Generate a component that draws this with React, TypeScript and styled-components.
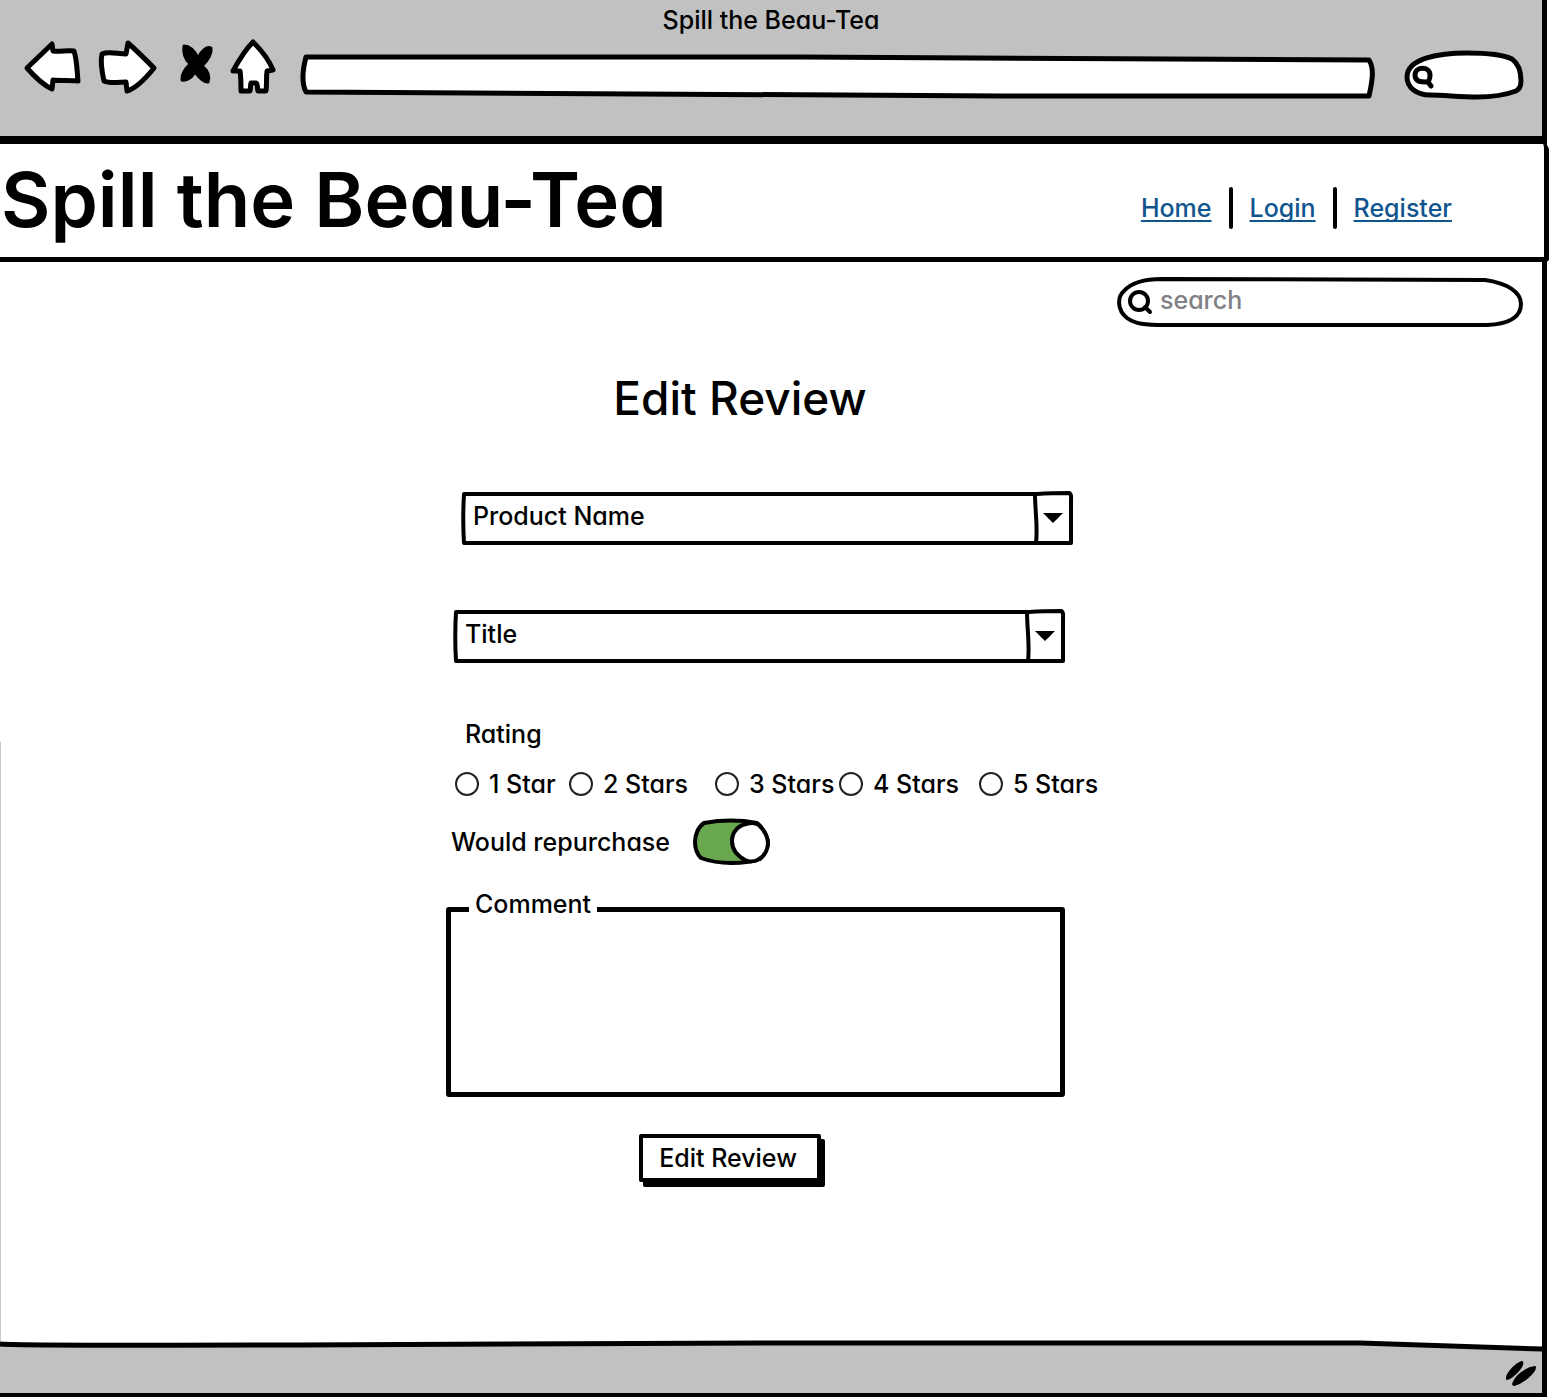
import React, { ReactNode } from "react";
import styled, { createGlobalStyle } from "styled-components";

const ink = "#000";
const grey = "#c1c1c1";

const GlobalStyle = createGlobalStyle`
  *, *::before, *::after { box-sizing: border-box; }
  body {
    margin: 0;
    background: #fff;
    color: ${ink};
    font-family: Inter, "Liberation Sans", sans-serif;
    font-size: 25px;
    font-weight: 500;
    line-height: 30px;
    font-feature-settings: "cv11";
  }
  input, select, textarea, button {
    font: inherit;
    font-feature-settings: inherit;
    color: inherit;
  }
`;

const Window = styled.div`
  display: flex;
  flex-direction: column;
  min-height: 100vh;
  margin-right: 18px;
  border-right: 5px solid ${ink};
`;

/* ---------- hand-drawn outlines ---------- */

const Sketched = styled.div<{ $width?: number; $height: number }>`
  position: relative;
  display: flex;
  flex: ${(p) => (p.$width ? "none" : "1")};
  width: ${(p) => (p.$width ? `${p.$width}px` : "auto")};
  height: ${(p) => p.$height}px;
`;

const OutlineSvg = styled.svg`
  position: absolute;
  inset: 0;
  width: 100%;
  height: 100%;
  overflow: visible;
  pointer-events: none;
`;

type OutlineProps = { box: string; d: string; stroke?: number; fill?: string; children?: ReactNode };

const Outline = ({ box, d, stroke = 5, fill = "#fff", children }: OutlineProps) => (
  <OutlineSvg viewBox={box} preserveAspectRatio="none" aria-hidden="true">
    <path
      d={d}
      fill={fill}
      stroke={ink}
      strokeWidth={stroke}
      strokeLinejoin="round"
      strokeLinecap="round"
      vectorEffect="non-scaling-stroke"
    />
    {children}
  </OutlineSvg>
);

const Field = styled.input<{ $indent?: number }>`
  position: relative;
  flex: 1;
  min-width: 0;
  padding: 0 20px 4px ${(p) => p.$indent ?? 16}px;
  border: 0;
  outline: 0;
  background: transparent;
  &::placeholder { color: #808086; opacity: 1; }
`;

/* ---------- browser chrome ---------- */

const Chrome = styled.div`
  height: 144px;
  background: ${grey};
  border-bottom: 8px solid ${ink};
`;

const WindowTitle = styled.div`
  line-height: 40px;
  text-align: center;
`;

const Toolbar = styled.div`
  display: flex;
  padding: 0 18px 0 24px;
`;

const ToolButtons = styled.div`
  display: flex;
  gap: 18px;
  margin-right: 25px;
`;

const ToolButton = styled.button`
  display: block;
  padding: 0;
  border: 0;
  background: none;
  svg { display: block; overflow: visible; }
`;

const AddressBar = styled.div`
  display: flex;
  flex: 1;
  margin-right: 29px;
`;

const tools = [
  {
    name: "Back", width: 56, solid: false,
    d: "M3 28 L28 4 L29 11 C36 12 43 10 50 11 C53 20 53 31 54 41 C45 40 37 41 29 40 L28 49 C19 45 10 36 3 28Z",
  },
  {
    name: "Forward", width: 58, solid: false,
    d: "M4 14 C10 11 20 14 28 14 L30 3 C38 10 48 20 56 28 C48 38 39 48 29 51 L28 42 C22 42 12 44 6 41 C4 32 2 22 4 14Z",
  },
  {
    name: "Stop", width: 39, solid: true,
    d: "M10 6 C17 6 21 12 24 18 C27 11 33 6 37 8 C38 14 33 21 28 26 C33 30 36 36 34 42 C28 42 24 36 21 32 C18 37 14 41 8 40 C7 34 12 28 16 24 C11 19 9 12 10 6Z",
  },
  {
    name: "Home", width: 45, solid: false,
    d: "M22 2 C30 10 38 20 42 30 L36 31 C35 38 36 44 35 51 L27 51 C26 48 27 44 25 43 L20 43 C19 45 20 48 19 51 L10 51 C10 44 10 37 9 31 L2 31 C8 20 14 10 22 2Z",
  },
];

/* ---------- site header ---------- */

const SiteHeader = styled.header`
  display: flex;
  align-items: center;
  justify-content: space-between;
  height: 118px;
  margin-right: -7px;
  padding: 0 92px 4px 1px;
  background: #fff;
  border: solid ${ink};
  border-width: 0 5px 5px 0;
  border-radius: 0 6px 4px 0;
`;

const SiteName = styled.div`
  font-size: 76px;
  font-weight: 600;
  line-height: 92px;
  white-space: nowrap;
`;

const Nav = styled.nav`
  display: flex;
  align-items: center;
  gap: 17px;
  padding-top: 18px;
`;

const NavLink = styled.a`
  color: #11558f;
  text-decoration: underline;
  text-decoration-thickness: 2px;
  text-underline-offset: 3px;
  text-decoration-skip-ink: none;
`;

const Divider = styled.span`
  width: 4px;
  height: 42px;
  border-radius: 2px;
  background: ${ink};
`;

/* ---------- page ---------- */

const Main = styled.main`
  display: flex;
  flex: 1;
  flex-direction: column;
  align-items: center;
  background: linear-gradient(#fff 480px, #c8c8c8 480px) left / 1px 100% no-repeat;
`;

const SearchRow = styled.div`
  display: flex;
  align-self: stretch;
  justify-content: flex-end;
  padding: 15px 19px 0;
`;

const Form = styled.form`
  display: flex;
  flex-direction: column;
  align-items: flex-start;
  width: 652px;
  padding-top: 43px;
`;

const Heading = styled.h1`
  width: 590px;
  margin: 0 0 65px;
  font-size: 46px;
  font-weight: 500;
  line-height: 56px;
  text-align: center;
`;

const SelectBox = styled.div<{ $indent: number; $after: number }>`
  position: relative;
  display: flex;
  width: 612px;
  height: 54px;
  margin: 0 0 ${(p) => p.$after}px ${(p) => p.$indent}px;
`;

const Select = styled.select`
  position: relative;
  flex: 1;
  padding: 0 48px 4px 12px;
  border: 0;
  outline: 0;
  appearance: none;
  background: transparent;
`;

const RadioGroup = styled.fieldset`
  display: block;
  min-width: 0;
  margin: 0 0 20px 10px;
  padding: 0;
  border: 0;
`;

const GroupName = styled.legend`
  margin-bottom: 20px;
  padding: 0 0 0 10px;
`;

const Options = styled.div`
  display: grid;
  grid-template-columns: 114px 146px 124px 140px auto;
  white-space: nowrap;
`;

const Option = styled.label`
  display: flex;
  align-items: center;
  gap: 10px;
`;

const Radio = styled.input`
  flex: none;
  width: 24px;
  height: 24px;
  margin: 0;
  border: 2px solid #222;
  border-radius: 50%;
  appearance: none;
  background: #fff;
  &:checked { box-shadow: inset 0 0 0 4px #fff; background: ${ink}; }
`;

const SwitchRow = styled.label`
  display: flex;
  align-items: center;
  gap: 23px;
  height: 46px;
  margin: 0 0 24px 6px;
`;

const SwitchInput = styled.input`
  flex: 1;
  margin: 0;
  appearance: none;
  outline: 0;
`;

const CommentBox = styled.fieldset`
  width: 619px;
  margin: 0 0 37px 1px;
  padding: 0;
  border: 5px solid ${ink};
  border-radius: 3px;
`;

const CommentLegend = styled.legend`
  margin-left: 18px;
  padding: 0 6px 10px;
`;

const CommentArea = styled.textarea`
  display: block;
  width: 100%;
  height: 163px;
  padding: 0 16px;
  border: 0;
  outline: 0;
  resize: none;
  background: transparent;
`;

const SubmitButton = styled.button`
  width: 182px;
  height: 48px;
  margin: 0 0 40px 194px;
  padding: 0 4px 0 0;
  border: 4px solid ${ink};
  border-radius: 2px;
  background: #fff;
  box-shadow: 4px 5px 0 ${ink};
`;

/* ---------- status bar ---------- */

const StatusBar = styled.footer`
  display: flex;
  flex-direction: column;
  height: 56px;
  background: ${grey};
  border-bottom: 4px solid ${ink};
`;

const StatusEdge = styled.svg`
  display: block;
  width: 100%;
  height: 12px;
  overflow: visible;
`;

const Grip = styled.svg`
  align-self: flex-end;
  margin: 8px 4px 0 0;
`;

const Dropdown = ({ label, indent, after }: { label: string; indent: number; after: number }) => (
  <SelectBox $indent={indent} $after={after}>
    <Outline
      box="0 0 612 54"
      stroke={4}
      d="M3 3 L576 3 C590 2 600 2 608 2 C611 3 610 6 610 10 L610 52 L3 52 C2 36 2 20 3 3Z M574 3 C574 20 577 36 575 52"
    >
      <path d="M582 22 L602 22 C598 26 595 29 592 32 C589 29 586 26 582 22Z" fill={ink} />
    </Outline>
    <Select aria-label={label} defaultValue={label}>
      <option>{label}</option>
    </Select>
  </SelectBox>
);

export default function App() {
  return (
    <>
      <GlobalStyle />
      <Window>
        <Chrome>
          <WindowTitle>Spill the Beau-Tea</WindowTitle>
          <Toolbar>
            <ToolButtons>
              {tools.map((t) => (
                <ToolButton key={t.name} type="button" aria-label={t.name}>
                  <svg width={t.width} height="62" viewBox={`0 0 ${t.width} 62`}>
                    <path
                      d={t.d}
                      fill={t.solid ? ink : "#fff"}
                      stroke={ink}
                      strokeWidth={t.solid ? 3 : 5}
                      strokeLinejoin="round"
                    />
                  </svg>
                </ToolButton>
              ))}
            </ToolButtons>
            <AddressBar>
              <Sketched $height={62}>
                <Outline
                  box="0 0 1074 62"
                  d="M5 17 L500 17 L1068 20 C1073 28 1072 38 1068 56 L700 56 L5 52 C1 44 1 32 5 17Z"
                />
                <Field aria-label="Address" />
              </Sketched>
            </AddressBar>
            <Sketched $width={120} $height={62}>
              <Outline
                box="0 0 120 62"
                d="M3 37 C3 18 36 13 63 13 C80 13 98 14 108 19 C115 24 117 33 117 41 C117 46 116 49 112 51 C104 54 88 57 73 57 C56 57 40 55 26 55 C12 55 3 47 3 37Z"
              >
                <path
                  d="M11 35 C11 26 26 26 26 35 C26 38 25 42 22 42 C17 42 11 42 11 35Z M24 42 L27 46"
                  fill="none"
                  stroke={ink}
                  strokeWidth="5"
                  strokeLinecap="round"
                />
              </Outline>
              <Field aria-label="Web search" $indent={34} />
            </Sketched>
          </Toolbar>
        </Chrome>

        <SiteHeader>
          <SiteName>Spill the Beau-Tea</SiteName>
          <Nav>
            <NavLink href="#home">Home</NavLink>
            <Divider />
            <NavLink href="#login">Login</NavLink>
            <Divider />
            <NavLink href="#register">Register</NavLink>
          </Nav>
        </SiteHeader>

        <Main>
          <SearchRow>
            <Sketched $width={406} $height={50}>
              <Outline
                box="0 0 406 50"
                stroke={4}
                d="M45 2 L368 3 C390 6 404 15 404 27 C404 40 392 47 370 48 L48 48 C28 48 18 47 10 41 C0 33 0 20 7 14 C14 6 28 2 45 2Z"
              >
                <g fill="none" stroke={ink} strokeWidth="4" strokeLinecap="round">
                  <circle cx="22" cy="24" r="9" />
                  <path d="M28 30 L33 35" />
                </g>
              </Outline>
              <Field placeholder="search" aria-label="Search" $indent={43} />
            </Sketched>
          </SearchRow>

          <Form onSubmit={(e) => e.preventDefault()}>
            <Heading>Edit Review</Heading>
            <Dropdown label="Product Name" indent={16} after={64} />
            <Dropdown label="Title" indent={8} after={56} />

            <RadioGroup>
              <GroupName>Rating</GroupName>
              <Options>
                {["1 Star", "2 Stars", "3 Stars", "4 Stars", "5 Stars"].map((name) => (
                  <Option key={name}>
                    <Radio type="radio" name="rating" value={name} />
                    {name}
                  </Option>
                ))}
              </Options>
            </RadioGroup>

            <SwitchRow>
              Would repurchase
              <Sketched $width={77} $height={46}>
                <Outline
                  box="0 0 77 46"
                  fill="#6aa84f"
                  stroke={4}
                  d="M11 4 C28 1 48 1 64 4 C70 9 75 18 75 25 C74 32 70 37 67 40 C60 43 48 44 38 44 C28 44 16 42 8 39 C3 34 2 28 2 23 C2 16 5 8 11 4Z"
                >
                  <path
                    d="M53 5 C59 3 63 4 66 6 C71 11 75 18 75 25 C74 33 70 38 66 40 C62 43 56 43 52 41 C43 36 39 30 39 22 C39 14 44 7 53 5Z"
                    fill="#fff"
                    stroke={ink}
                    strokeWidth="4"
                  />
                </Outline>
                <SwitchInput type="checkbox" role="switch" defaultChecked />
              </Sketched>
            </SwitchRow>

            <CommentBox>
              <CommentLegend>
                <label htmlFor="comment">Comment</label>
              </CommentLegend>
              <CommentArea id="comment" />
            </CommentBox>

            <SubmitButton type="submit">Edit Review</SubmitButton>
          </Form>
        </Main>

        <StatusBar>
          <StatusEdge viewBox="0 0 1542 12" preserveAspectRatio="none" aria-hidden="true">
            <path d="M0 0 L1542 0 L1542 8 L1360 3 L0 4Z" fill="#fff" />
            <path
              d="M0 3 C40 5 120 4 300 4 L760 2 L1360 2 C1420 4 1480 6 1542 8"
              fill="none"
              stroke={ink}
              strokeWidth="5"
            />
          </StatusEdge>
          <Grip width="34" height="28" viewBox="0 0 34 28" aria-hidden="true">
            <path
              d="M3 17 C3 12 12 3 18 1 C20 4 11 15 3 18Z M9 23 C12 15 22 7 31 6 C31 12 18 22 10 24Z"
              fill={ink}
              stroke={ink}
              strokeWidth="2"
              strokeLinejoin="round"
            />
          </Grip>
        </StatusBar>
      </Window>
    </>
  );
}
